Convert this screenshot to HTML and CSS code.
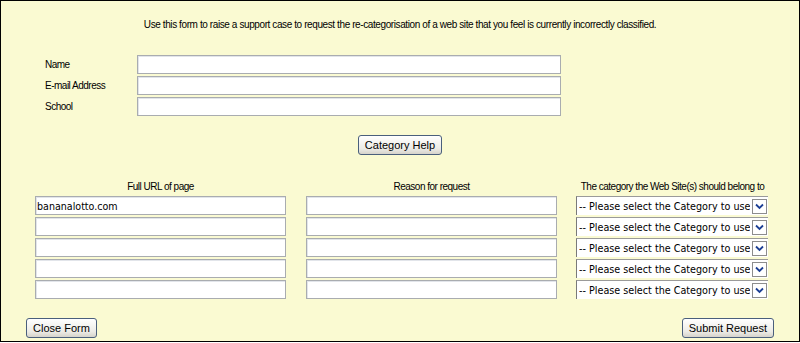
FILE: index.html
```html
<!DOCTYPE html>
<html lang="en">
<head>
  <meta charset="UTF-8" />
  <title>Re-categorisation Request</title>
  <link rel="stylesheet" href="styles.css">
</head>
<body>
  <div class="frame">
    <p class="intro">Use this form to raise a support case to request the re-categorisation of a web site that you feel is currently incorrectly classified.</p>

    <!-- Requester details -->
    <div class="details">
      <label for="name">Name</label>
      <input type="text" id="name">
      <label for="email">E-mail Address</label>
      <input type="text" id="email">
      <label for="school">School</label>
      <input type="text" id="school">
    </div>

    <div class="help">
      <button type="button" class="btn">Category Help</button>
    </div>

    <!-- Sites to re-categorise -->
    <div class="sites heads">
      <div class="col-head">Full URL of page</div>
      <div class="col-head">Reason for request</div>
      <div class="col-head">The category the Web Site(s) should belong to</div>
    </div>
    <div class="sites" id="siteRows"></div>

    <div class="actions">
      <button type="button" class="btn">Close Form</button>
      <button type="submit" class="btn">Submit Request</button>
    </div>
  </div>

<script>
  // five site rows, first one filled in
  const rows = document.getElementById("siteRows");
  const urls = ["bananalotto.com", "", "", "", ""];

  urls.forEach((url) => {
    const u = document.createElement("input");
    u.type = "text";
    u.className = "site-input";
    u.value = url;

    const r = document.createElement("input");
    r.type = "text";
    r.className = "site-input";

    const wrap = document.createElement("div");
    wrap.className = "pick";
    wrap.innerHTML =
      '<select><option>-- Please select the Category to use --</option></select>' +
      '<span class="pick-arrow"><svg width="9" height="7" viewBox="0 0 9 7"><path d="M1 1.5 L4.5 5 L8 1.5" fill="none" stroke="#1c3f94" stroke-width="1.8"/></svg></span>';

    rows.appendChild(u);
    rows.appendChild(r);
    rows.appendChild(wrap);
  });
</script>
</body>
</html>
```

FILE: styles.css
```css
/* Base styling */
body {
  margin: 0;
  font-family: 'Liberation Sans', Arial, sans-serif;
  color: #000;
  background: #fff;
}
.frame {
  box-sizing: border-box;
  width: 800px;
  height: 342px;
  border: 1px solid #000;
  background-color: #fafad2;
}
.intro {
  margin: 0;
  padding-top: 18px;
  text-align: center;
  font-size: 10px;
  letter-spacing: -0.4px;
}
/* Name / email / school */
.details {
  display: grid;
  grid-template-columns: 92px 424px;
  row-gap: 2px;
  align-items: center;
  margin: 25px 0 0 44px;
  font-size: 10px;
  letter-spacing: -0.5px;
}
input[type="text"] {
  box-sizing: border-box;
  height: 19px;
  margin: 0;
  padding: 0 1px;
  border: 1px solid #a9acb0;
  box-shadow: inset 1px 1px 0 #e2e5ea;
  background: #fff;
  font-family: 'DejaVu Sans Condensed', 'DejaVu Sans', sans-serif;
  font-size: 10.6px;
}
.help {
  text-align: center;
  margin-top: 19px;
}
.btn {
  height: 20px;
  padding: 0 6px;
  border: 1px solid #4a5f7c;
  border-radius: 3px;
  background: linear-gradient(#ffffff, #ecebe6 70%, #d6d3cb);
  font-family: 'Liberation Sans', Arial, sans-serif;
  font-size: 11px;
  color: #000;
  cursor: pointer;
}
/* Site rows */
.sites {
  display: grid;
  grid-template-columns: 251px 251px 191px;
  column-gap: 20px;
  row-gap: 2px;
  margin-left: 34px;
}
.heads {
  margin-top: 26px;
  margin-bottom: 4px;
}
.col-head {
  text-align: center;
  white-space: nowrap;
  font-size: 10px;
  letter-spacing: -0.5px;
}
.pick {
  display: flex;
  align-items: center;
  box-sizing: border-box;
  height: 19px;
  margin-left: -1px;
  background: #fff;
  border-left: 1px solid #7a7a7a;
  border-top: 1px solid #9a9a9a;
}
.pick select {
  flex: 1;
  min-width: 0;
  height: 100%;
  margin: 0;
  padding: 0 2px;
  border: none;
  outline: none;
  appearance: none;
  -webkit-appearance: none;
  background: transparent;
  font-family: 'DejaVu Sans Condensed', 'DejaVu Sans', sans-serif;
  font-size: 10.7px;
  color: #000;
}
.pick-arrow {
  display: flex;
  align-items: center;
  justify-content: center;
  box-sizing: border-box;
  width: 15px;
  height: 15px;
  margin-right: 1px;
  border: 1px solid #8d8d8d;
  background: #fff;
}
.actions {
  display: flex;
  justify-content: space-between;
  padding: 0 25px;
  margin-top: 19px;
}
```
